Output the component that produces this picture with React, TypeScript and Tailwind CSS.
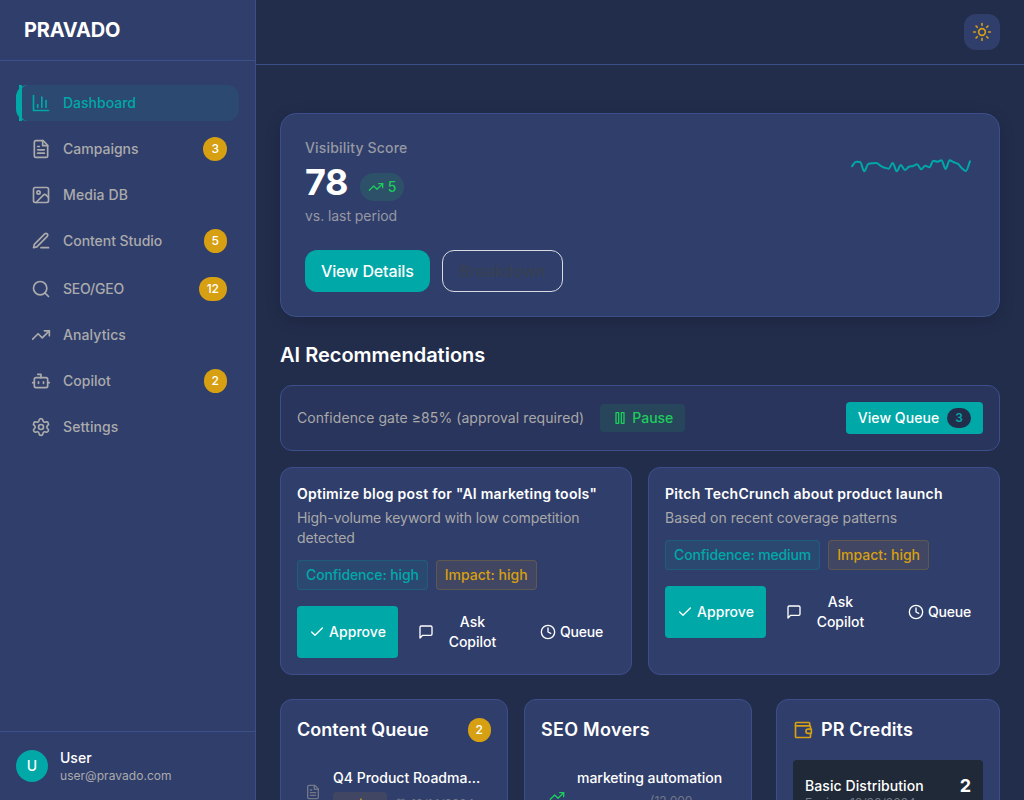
import React from 'react';
import { Calendar, Check, Clock, Search, Settings, TrendingUp, Bot, Image, Sun } from 'lucide-react';

type IconProps = { className?: string };

function Svg({ className, children }: IconProps & { children: React.ReactNode }) {
  return (
    <svg className={className} viewBox="0 0 24 24" fill="none" stroke="currentColor" strokeWidth="2" strokeLinecap="round" strokeLinejoin="round">
      {children}
    </svg>
  );
}

const BarChart = ({ className }: IconProps) => (
  <Svg className={className}>
    <path d="M3 3v18h18" />
    <path d="M18 17V9" />
    <path d="M13 17V5" />
    <path d="M8 17v-3" />
  </Svg>
);

const FileText = ({ className }: IconProps) => (
  <Svg className={className}>
    <path d="M14.5 2H6a2 2 0 0 0-2 2v16a2 2 0 0 0 2 2h12a2 2 0 0 0 2-2V7.5L14.5 2z" />
    <path d="M14 2v6h6" />
    <path d="M16 13H8" />
    <path d="M16 17H8" />
    <path d="M10 9H8" />
  </Svg>
);

const Pen = ({ className }: IconProps) => (
  <Svg className={className}>
    <path d="M12 20h9" />
    <path d="M16.5 3.5a2.12 2.12 0 0 1 3 3L7 19l-4 1 1-4Z" />
  </Svg>
);

const Wallet = ({ className }: IconProps) => (
  <Svg className={className}>
    <path d="M20 7V4a1 1 0 0 0-1-1H4a1 1 0 0 0-1 1v16a1 1 0 0 0 1 1h16a1 1 0 0 0 1-1v-3" />
    <path d="M3 7h17a1 1 0 0 1 1 1v3" />
    <path d="M22 11h-4a2 2 0 0 0 0 5h4z" />
  </Svg>
);

const MessageBubble = ({ className }: IconProps) => (
  <Svg className={className}>
    <path d="M21 15a2 2 0 0 1-2 2H7l-4 4V5a2 2 0 0 1 2-2h14a2 2 0 0 1 2 2z" />
  </Svg>
);

const PauseBars = ({ className }: IconProps) => (
  <Svg className={className}>
    <path d="M6 4h4v16H6z" />
    <path d="M14 4h4v16h-4z" />
  </Svg>
);

const nav = [
  { label: 'Dashboard', icon: BarChart, active: true },
  { label: 'Campaigns', icon: FileText, count: 3 },
  { label: 'Media DB', icon: Image, tracking: 'tracking-[0.1px]' },
  { label: 'Content Studio', icon: Pen, count: 5, tracking: 'tracking-[-0.04px]' },
  { label: 'SEO/GEO', icon: Search, count: 12, tracking: 'tracking-[-0.2px]' },
  { label: 'Analytics', icon: TrendingUp, tracking: 'tracking-[0.1px]' },
  { label: 'Copilot', icon: Bot, count: 2 },
  { label: 'Settings', icon: Settings, tracking: 'tracking-[0.12px]' },
];

function Count({ value }: { value: number }) {
  return <span className="rounded-full bg-[#d79f12] px-2 py-1 text-xs font-medium text-white">{value}</span>;
}

const trend = [
  18.3, 13.7, 14, 23.3, 16, 15.3, 15, 17.7, 19.7, 20.7, 15, 23.3, 17, 22, 18.7, 18, 16.3, 21.3, 17.7, 19.3, 12.7, 13.7,
  12.3, 21, 12.3, 14.3, 15.7, 20.3, 23, 13.3,
];

// Monotone cubic interpolation through evenly spaced samples.
function sparkPath(values: number[], width: number) {
  const step = width / (values.length - 1);
  const slopes = values.map((v, i) => {
    if (i === 0 || i === values.length - 1) return 0;
    const a = v - values[i - 1];
    const b = values[i + 1] - v;
    return a * b <= 0 ? 0 : (2 * a * b) / (a + b);
  });
  slopes[0] = values[1] - values[0];
  slopes[values.length - 1] = values[values.length - 1] - values[values.length - 2];
  return values.reduce((d, v, i) => {
    if (i === 0) return `M0 ${v}`;
    const x = i * step;
    return `${d}C${x - (step * 2) / 3} ${values[i - 1] + slopes[i - 1] / 3} ${x - step / 3} ${v - slopes[i] / 3} ${x} ${v}`;
  }, '');
}

function Recommendation({ title, text, confidence, textTracking }: { title: string; text: string; confidence: string; textTracking: string }) {
  return (
    <div className="rounded-xl border border-[#3c4f8a] bg-[#303e6b] p-4">
      <h3 className="text-sm font-semibold tracking-[0.25px] text-white">{title}</h3>
      <p className={`mt-1 text-sm text-[#a9a9a9] ${textTracking}`}>{text}</p>
      <div className="mt-3 flex gap-2 text-sm font-medium">
        <span className="rounded border border-[#00a8a8]/20 bg-[#00a8a8]/10 px-2 py-1 tracking-[-0.12px] text-[#00a8a8]">Confidence: {confidence}</span>
        <span className="rounded border border-[#d79f12]/20 bg-[#d79f12]/10 px-2 py-1 text-[#d79f12]">Impact: high</span>
      </div>
      <div className="mt-4 flex gap-2 text-sm font-medium text-white">
        <button className="flex items-center justify-center rounded bg-[#00a8a8] px-3 py-1.5 tracking-[0.06px]">
          <Check className="mr-1 size-4 shrink-0" />
          Approve
        </button>
        <button className="flex items-center justify-center px-3 py-1.5">
          <MessageBubble className="mr-1 size-4 shrink-0" />
          <span className="-ml-px">Ask Copilot</span>
        </button>
        <button className="flex items-center justify-center px-3 py-1.5 tracking-[-0.2px]">
          <Clock className="mr-1 size-4 shrink-0" />
          Queue
        </button>
      </div>
    </div>
  );
}

export default function App() {
  return (
    <div className="flex h-screen overflow-hidden bg-[#222d4c] font-['Inter',sans-serif] text-white">
      <aside className="flex w-64 shrink-0 flex-col border-r border-[#3c4f8a] bg-[#303e6b]">
        <div className="border-b border-[#3c4f8a] px-6 py-4 text-xl font-bold tracking-[-0.2px]">PRAVADO</div>
        <nav className="flex flex-1 flex-col gap-2 px-4 py-6">
          {nav.map(({ label, icon: Icon, count, active, tracking }) => (
            <a
              key={label}
              className={
                active
                  ? 'relative flex items-center gap-3 rounded-xl border-l-[3px] border-[#00a8a8] bg-[#00a8a8]/10 px-3 py-2 text-sm font-medium text-[#00a8a8]'
                  : 'flex items-center gap-3 rounded-xl border-l-[3px] border-transparent px-3 py-2 text-sm font-medium text-[#ababab]'
              }
            >
              {active && <span className="absolute inset-y-0 left-0 w-[3px] bg-[#00a8a8]" />}
              <Icon className="size-5" />
              <span className={`flex-1 ${tracking ?? ''}`}>{label}</span>
              {count && <Count value={count} />}
            </a>
          ))}
        </nav>
        <div className="flex items-center gap-3 border-t border-[#3c4f8a] p-4">
          <div className="flex size-8 items-center justify-center rounded-full bg-[#00a8a8] text-sm font-medium">U</div>
          <div>
            <p className="text-sm font-medium">User</p>
            <p className="text-xs tracking-[0.04px] text-[#ababab]">user@pravado.com</p>
          </div>
        </div>
      </aside>

      <div className="flex min-w-0 flex-1 flex-col">
        <header className="flex h-[65px] shrink-0 items-center justify-end border-b border-[#3c4f8a] px-6">
          <button className="flex size-9 items-center justify-center rounded-xl bg-[#303e6b] text-[#d79f12]">
            <Sun className="size-5" />
          </button>
        </header>

        <main className="flex-1 overflow-hidden px-6 pt-12">
          <section className="flex items-start justify-between rounded-2xl border border-[#3c4f8a] bg-[#303e6b] p-6 shadow-[0_4px_16px_rgba(0,0,0,0.15)]">
            <div>
              <p className="text-sm font-medium tracking-[0.18px] text-[#9699a3]">Visibility Score</p>
              <div className="mt-1 flex items-end gap-3">
                <span className="text-4xl font-bold tracking-[-0.5px]">78</span>
                <span className="mb-px flex items-center gap-1 rounded-full bg-[#22c55e]/15 px-2 py-1 text-sm font-medium tracking-[-0.6px] text-[#1ccd5b]">
                  <TrendingUp className="size-4" />5
                </span>
              </div>
              <p className="mt-1 text-sm tracking-[-0.06px] text-[#9699a3]">vs. last period</p>
              <div className="mt-6 flex gap-3 font-medium">
                <button className="h-[42px] rounded-xl bg-[#00a8a8] px-4 tracking-[-0.13px]">View Details</button>
                <button className="h-[42px] rounded-xl border border-[#d9dbe0] px-4 tracking-[0.15px] text-[#374151]">Breakdown</button>
              </div>
            </div>
            <svg className="mt-2.5 mr-[3px] h-10 w-[120px] overflow-visible" viewBox="0 0 120 40" fill="none">
              <path d={sparkPath(trend, 118)} stroke="#00a8a8" strokeWidth="2" strokeLinecap="round" />
            </svg>
          </section>

          <h2 className="mt-6 text-xl font-semibold">AI Recommendations</h2>

          <div className="mt-4 flex items-center justify-between rounded-xl border border-[#3c4f8a] bg-[#29355c] p-4 text-sm">
            <div className="flex items-center gap-4">
              <span className="tracking-[0.075px] text-[#a9a9a9]">Confidence gate ≥85% (approval required)</span>
              <button className="flex items-center gap-1 rounded bg-[#22c55e]/12 px-3 py-1 font-medium text-[#1ccd5b]">
                <PauseBars className="size-4" />
                Pause
              </button>
            </div>
            <button className="flex items-center gap-2 rounded bg-[#00a8a8] px-3 py-1.5 font-medium tracking-[0.07px]">
              View Queue
              <span className="rounded-full bg-[#222d4c] px-2 py-0.5 text-xs font-semibold text-[#00a8a8]">3</span>
            </button>
          </div>

          <div className="mt-4 grid grid-cols-2 gap-4">
            <Recommendation
              title={'Optimize blog post for "AI marketing tools"'}
              text="High-volume keyword with low competition detected"
              confidence="high"
              textTracking="tracking-[-0.09px]"
            />
            <Recommendation title="Pitch TechCrunch about product launch" text="Based on recent coverage patterns" confidence="medium" textTracking="tracking-normal" />
          </div>

          <div className="mt-6 grid grid-cols-3 gap-6">
            <div className="col-span-2 grid grid-cols-2 gap-4">
              <div className="h-72 rounded-xl border border-[#3c4f8a] bg-[#303e6b] p-4">
                <div className="flex items-center justify-between">
                  <h2 className="text-lg font-semibold tracking-[0.04px]">Content Queue</h2>
                  <Count value={2} />
                </div>
                <div className="mt-6 flex items-center gap-3 px-2">
                  <FileText className="size-4 shrink-0 text-[#737888]" />
                  <div className="min-w-0 flex-1">
                    <p className="truncate text-sm font-medium">Q4 Product Roadmap Update</p>
                    <div className="mt-1 flex items-center gap-2">
                      <span className="rounded bg-[#d79f12]/10 px-2 py-1 text-xs font-medium text-[#d79f12]">review</span>
                      <span className="flex items-center gap-1 text-xs text-[#737888]">
                        <Calendar className="size-3" />
                        12/14/2024
                      </span>
                    </div>
                  </div>
                </div>
              </div>

              <div className="h-72 rounded-xl border border-[#3c4f8a] bg-[#303e6b] p-4">
                <h2 className="text-lg font-semibold tracking-[0.28px]">SEO Movers</h2>
                <div className="mt-6 flex items-start gap-3 px-2">
                  <TrendingUp className="mt-5 size-4 shrink-0 text-[#1ccd5b]" />
                  <div>
                    <p className="text-sm font-medium tracking-[-0.04px]">marketing automation</p>
                    <p className="mt-[5px] pl-[73px] text-xs text-[#737888]">(12,000</p>
                  </div>
                </div>
              </div>
            </div>

            <div className="h-72 rounded-xl border border-[#3c4f8a] bg-[#303e6b] p-4">
              <h2 className="flex items-center gap-2 text-lg font-semibold tracking-[0.14px]">
                <Wallet className="size-5 text-[#d79f12]" />
                PR Credits
              </h2>
              <div className="mt-4 flex items-start justify-between rounded bg-[#1f2937] p-3">
                <div className="pt-1">
                  <p className="text-sm font-medium tracking-[0.08px]">Basic Distribution</p>
                  <p className="text-xs leading-[14px] text-[#737888]">Expires 12/30/2024</p>
                </div>
                <span className="text-lg font-bold">2</span>
              </div>
            </div>
          </div>
        </main>
      </div>
    </div>
  );
}
